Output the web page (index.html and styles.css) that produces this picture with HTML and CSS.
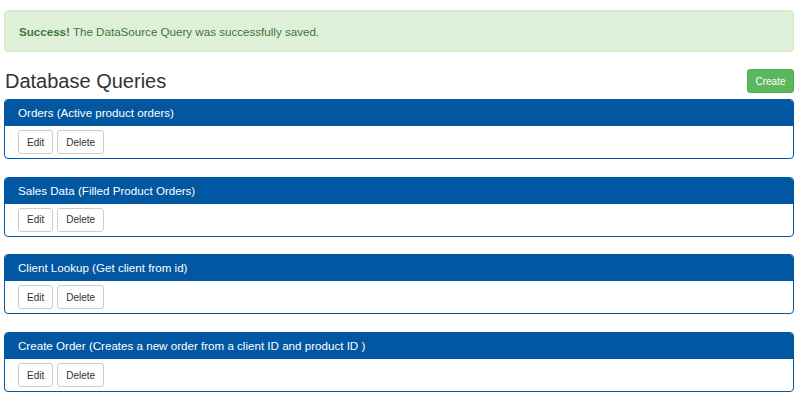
FILE: index.html
```html
<!DOCTYPE html>
<html>
<head>
<meta charset="utf-8">
<link rel="stylesheet" href="styles.css">
</head>
<body>
<div class="page">
  <div class="alert"><strong>Success!</strong> The DataSource Query was successfully saved.</div>
  <div class="title-row">
    <h1 class="title">Database Queries</h1>
    <button class="btn btn-create">Create</button>
  </div>
  <div class="panel">
    <div class="panel-head">Orders (Active product orders)</div>
    <div class="panel-body"><button class="btn">Edit</button><button class="btn">Delete</button></div>
  </div>
  <div class="panel">
    <div class="panel-head">Sales Data (Filled Product Orders)</div>
    <div class="panel-body"><button class="btn">Edit</button><button class="btn">Delete</button></div>
  </div>
  <div class="panel">
    <div class="panel-head">Client Lookup (Get client from id)</div>
    <div class="panel-body"><button class="btn">Edit</button><button class="btn">Delete</button></div>
  </div>
  <div class="panel">
    <div class="panel-head">Create Order (Creates a new order from a client ID and product ID )</div>
    <div class="panel-body"><button class="btn">Edit</button><button class="btn">Delete</button></div>
  </div>
</div>
</body>
</html>
```

FILE: styles.css
```css
html, body {
  margin: 0;
  padding: 0;
  background: #ffffff;
}

body {
  font-family: "Liberation Sans", Arial, sans-serif;
  color: #333333;
}

.page {
  width: 790px;
  margin-left: 4px;
  padding-top: 10px;
}

.alert {
  box-sizing: border-box;
  height: 42px;
  padding: 0 14px;
  display: flex;
  align-items: center;
  background: #dff0d8;
  border: 1px solid #d6e9c6;
  border-radius: 4px;
  color: #3c763d;
  font-size: 11.6px;
}

.alert strong {
  font-weight: bold;
  margin-right: 3px;
}

.title-row {
  display: flex;
  justify-content: space-between;
  align-items: center;
  margin-top: 17px;
  margin-bottom: 6px;
  height: 24px;
}

.title {
  margin: 0 0 0 1px;
  font-size: 20px;
  font-weight: normal;
  line-height: 24px;
  color: #333333;
}

.btn {
  box-sizing: border-box;
  height: 24px;
  padding: 0 8px;
  font-family: "Liberation Sans", Arial, sans-serif;
  font-size: 10px;
  color: #333333;
  background: #ffffff;
  border: 1px solid #cccccc;
  border-radius: 3px;
  cursor: pointer;
}

.btn-create {
  width: 47px;
  padding: 0;
  color: #ffffff;
  background: #5cb85c;
  border-color: #4cae4c;
}

.panel {
  box-sizing: border-box;
  height: 60px;
  margin-bottom: 17.7px;
  border: 1px solid #0157a1;
  border-radius: 4px;
  overflow: hidden;
}

.panel-head {
  height: 26px;
  background: #0157a1;
  color: #ffffff;
  font-size: 11.6px;
  line-height: 26px;
  padding-left: 13px;
}

.panel-body {
  display: flex;
  gap: 4px;
  padding: 4px 13px 0;
}
```
